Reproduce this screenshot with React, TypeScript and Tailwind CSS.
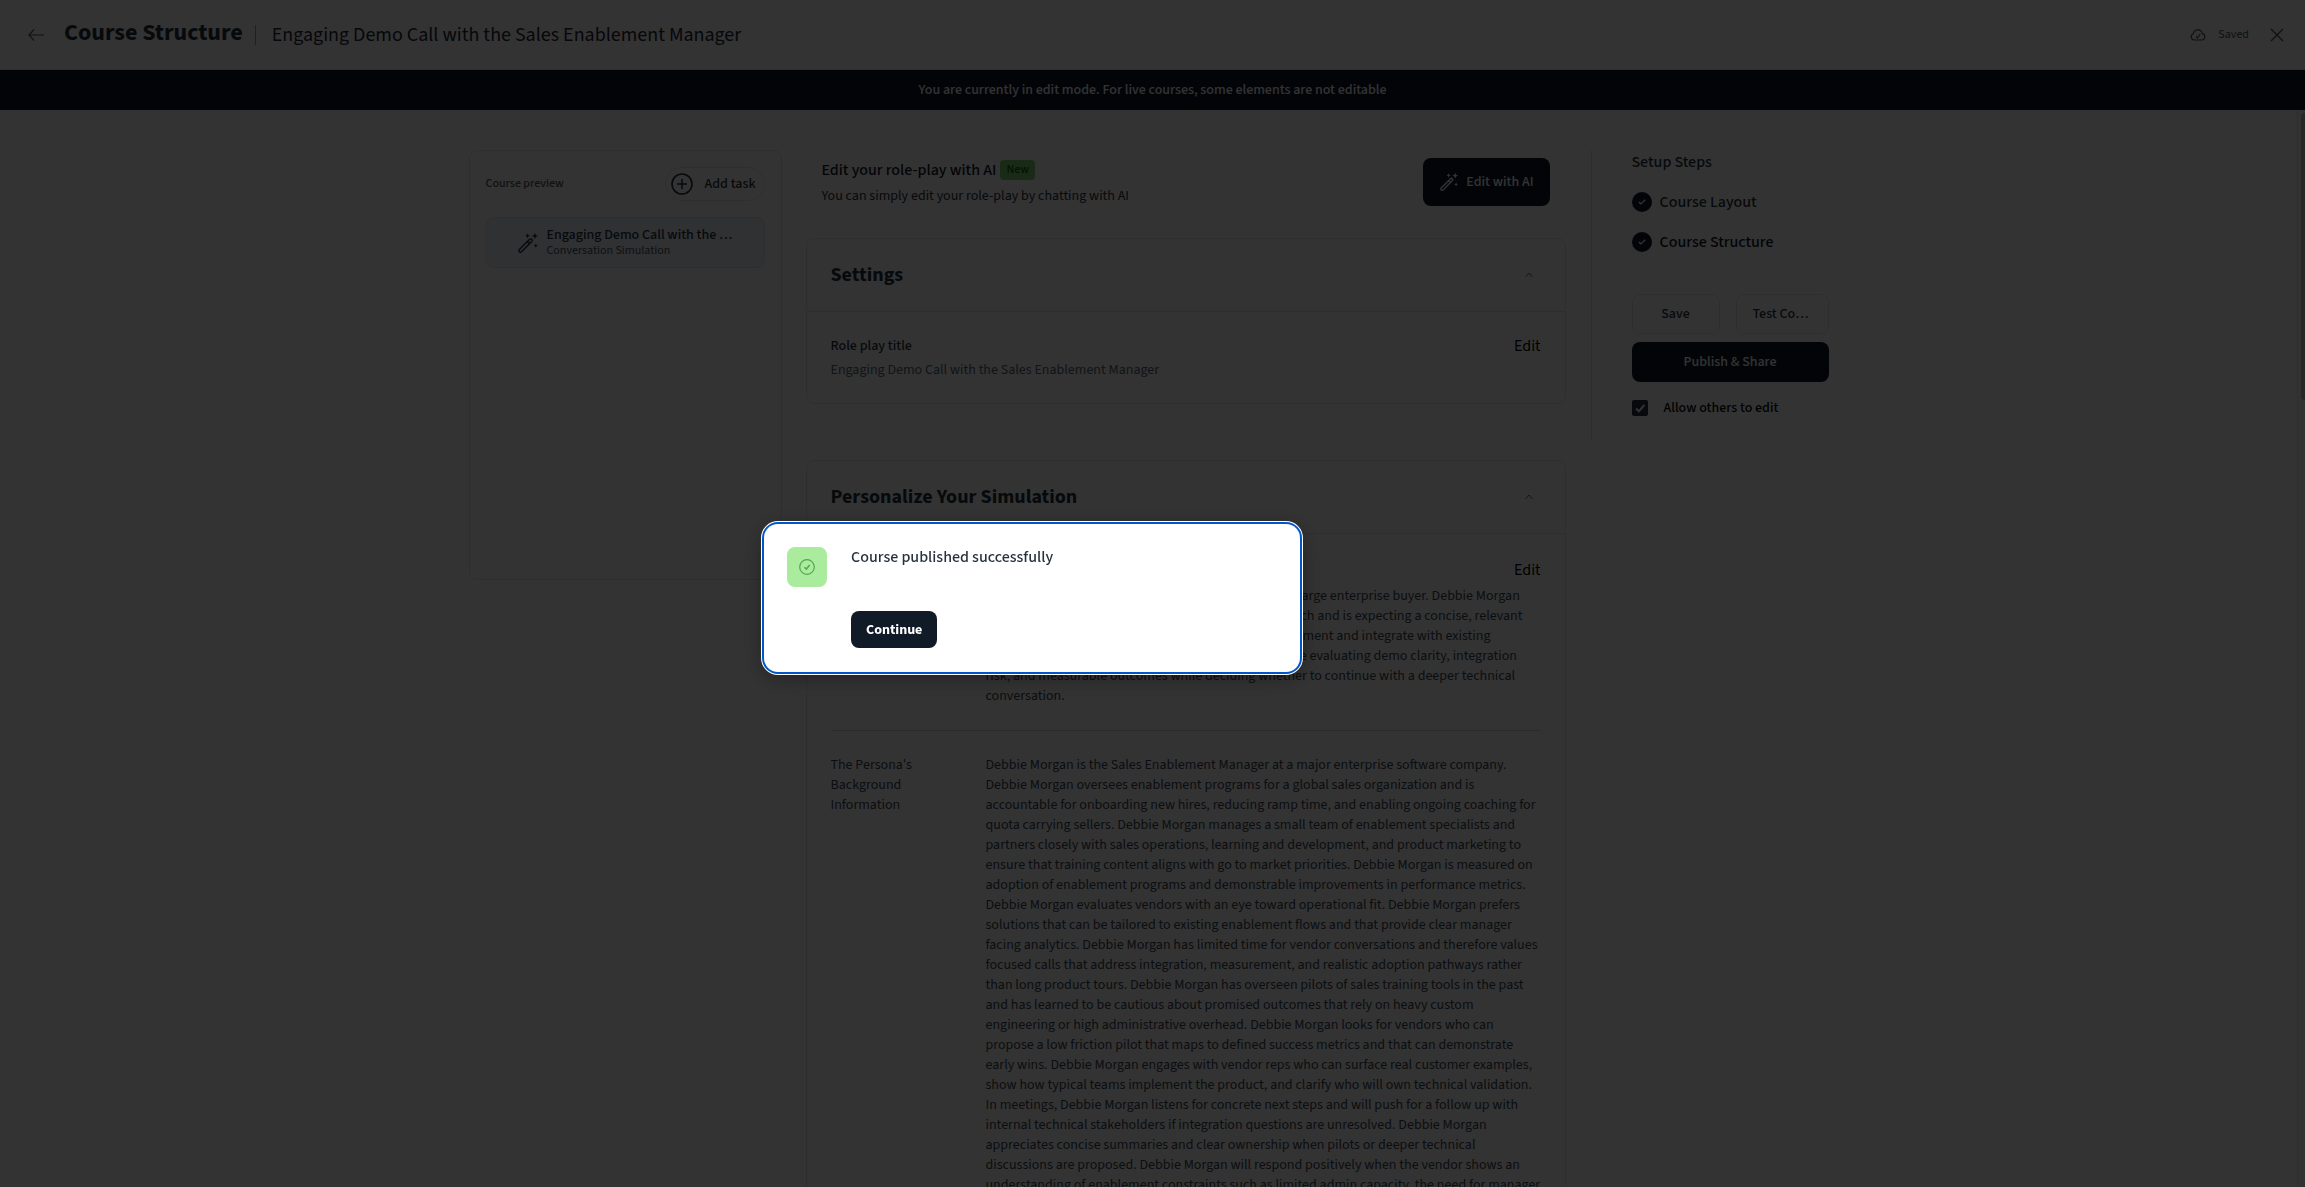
import React, { useState } from 'react';

const COURSE_TITLE = 'Engaging Demo Call with the Sales Enablement Manager';

const SCENARIO = [
  "You're presenting a product demo over video call to a large enterprise buyer. Debbie Morgan",
  'has already completed an introduction with a sales pitch and is expecting a concise, relevant',
  'walkthrough. The demo should align with sales enablement and integrate with existing',
  'systems used by the wider team. Debbie Morgan will be evaluating demo clarity, integration',
  'risk, and measurable outcomes while deciding whether to continue with a deeper technical',
  'conversation.',
];

const BACKGROUND = [
  'Debbie Morgan is the Sales Enablement Manager at a major enterprise software company.',
  'Debbie Morgan oversees enablement programs for a global sales organization and is',
  'accountable for onboarding new hires, reducing ramp time, and enabling ongoing coaching for',
  'quota carrying sellers. Debbie Morgan manages a small team of enablement specialists and',
  'partners closely with sales operations, learning and development, and product marketing to',
  'ensure that training content aligns with go to market priorities. Debbie Morgan is measured on',
  'adoption of enablement programs and demonstrable improvements in performance metrics.',
  'Debbie Morgan evaluates vendors with an eye toward operational fit. Debbie Morgan prefers',
  'solutions that can be tailored to existing enablement flows and that provide clear manager',
  'facing analytics. Debbie Morgan has limited time for vendor conversations and therefore values',
  'focused calls that address integration, measurement, and realistic adoption pathways rather',
  'than long product tours. Debbie Morgan has overseen pilots of sales training tools in the past',
  'and has learned to be cautious about promised outcomes that rely on heavy custom',
  'engineering or high administrative overhead. Debbie Morgan looks for vendors who can',
  'propose a low friction pilot that maps to defined success metrics and that can demonstrate',
  'early wins. Debbie Morgan engages with vendor reps who can surface real customer examples,',
  'show how typical teams implement the product, and clarify who will own technical validation.',
  'In meetings, Debbie Morgan listens for concrete next steps and will push for a follow up with',
  'internal technical stakeholders if integration questions are unresolved. Debbie Morgan',
  'appreciates concise summaries and clear ownership when pilots or deeper technical',
  'discussions are proposed. Debbie Morgan will respond positively when the vendor shows an',
  'understanding of enablement constraints such as limited admin capacity, the need for manager',
];

const WandIcon: React.FC<{ className?: string }> = ({ className }) => (
  <svg viewBox="0 0 24 24" className={className} fill="none" stroke="currentColor" strokeWidth="1.6" strokeLinejoin="round">
    <path d="M2.6 19.2 13.8 8a1.6 1.6 0 0 1 2.3 2.3L4.9 21.5a1.6 1.6 0 0 1-2.3-2.3ZM11.4 10.4l2.3 2.3" />
    <path
      stroke="none"
      fill="currentColor"
      d="m19.5.8 1 2.5 2.5 1-2.5 1-1 2.5-1-2.5-2.5-1 2.5-1zM11.5 1.5l.8 1.8 1.8.8-1.8.8-.8 1.8-.8-1.8-1.8-.8 1.8-.8zM20.5 12.5l.7 1.6 1.6.7-1.6.7-.7 1.6-.7-1.6-1.6-.7 1.6-.7z"
    />
  </svg>
);

const CardHeader: React.FC<{ title: string }> = ({ title }) => (
  <div className="flex h-[73px] items-center justify-between border-b border-gray-200 px-6">
    <h2 className="text-xl font-bold text-[#27323f]">{title}</h2>
    <button aria-label="Collapse" className="mr-2 text-gray-500">
      <svg viewBox="0 0 8 6" className="h-[6px] w-2" fill="none" stroke="currentColor">
        <path d="M.5 5 4 1l3.5 4" />
      </svg>
    </button>
  </div>
);

const Step: React.FC<{ label: string; current?: boolean }> = ({ label, current }) => (
  <li className={`flex items-center gap-2 text-base leading-5 font-medium ${current ? 'text-[#0f172a]' : 'text-[#27323f]'}`}>
    <span className="flex h-5 w-5 items-center justify-center rounded-full bg-[#0f172a] text-white">
      <svg viewBox="0 0 8 6" className="h-[6px] w-2" fill="none" stroke="currentColor" strokeWidth="1.2">
        <path d="m.8 3 2 2L7.3.8" />
      </svg>
    </span>
    {label}
  </li>
);

const Lines: React.FC<{ lines: string[] }> = ({ lines }) => (
  <p className="flex-1 whitespace-pre text-[#3b4754]">{lines.join('\n')}</p>
);

const TopBar: React.FC = () => (
  <header className="flex h-[70px] shrink-0 items-center justify-between border-b border-gray-200 px-4">
    <div className="flex items-center">
      <button aria-label="Back" className="ml-3 text-gray-600">
        <svg viewBox="0 0 17 14" className="h-[14px] w-4" fill="none" stroke="currentColor" strokeWidth="1.2">
          <path d="M17 7H1M6.5 1 1 7l5.5 6" />
        </svg>
      </button>
      <h1 className="ml-5 pb-1 text-2xl leading-7 font-bold text-[#27323f]">Course Structure</h1>
      <span className="ml-3 h-5 w-px bg-gray-400" />
      <span className="ml-4 text-xl text-[#1f2937]">{COURSE_TITLE}</span>
    </div>
    <div className="flex items-center text-[#4a5663]">
      <svg viewBox="0 0 16 13" className="h-[13px] w-4" fill="none" stroke="currentColor" strokeWidth="1.2">
        <path d="M4 12a3.2 3.2 0 0 1-.7-6.2A4.7 4.7 0 0 1 12.5 5.6 3.3 3.3 0 0 1 12 12ZM6 8.3l1.5 1.5L10.3 6" />
      </svg>
      <span className="ml-3 text-xs">Saved</span>
      <button aria-label="Close" className="ml-4">
        <svg viewBox="0 0 24 24" className="h-6 w-6" fill="none" stroke="currentColor" strokeWidth="1.4">
          <path d="m6 6 12 12M18 6 6 18" />
        </svg>
      </button>
    </div>
  </header>
);

const CoursePreview: React.FC = () => (
  <aside className="h-[430px] w-[313px] shrink-0 rounded-lg border border-gray-200 px-4 pt-4">
    <div className="flex items-center justify-between">
      <span className="text-xs font-medium text-[#4a5663]">Course preview</span>
      <button className="flex h-[34px] items-center gap-3 rounded-full border border-gray-200 pr-2 pl-[5px] font-medium text-[#27323f]">
        <svg viewBox="0 0 22 22" className="h-[22px] w-[22px]" fill="none" stroke="currentColor" strokeWidth="1.6">
          <circle cx="11" cy="11" r="10" />
          <path d="M11 6v10M6 11h10" />
        </svg>
        Add task
      </button>
    </div>
    <div className="mt-4 flex h-[51px] items-center gap-2 rounded-lg border border-gray-200 bg-[#edf2f8] pr-7 pl-[30px]">
      <WandIcon className="h-[22px] w-[22px] shrink-0 text-[#27323f]" />
      <div className="min-w-0 pt-px">
        <p className="truncate leading-4 font-medium text-[#27323f]">{COURSE_TITLE}</p>
        <p className="text-xs leading-4 text-[#4a5663]">Conversation Simulation</p>
      </div>
    </div>
  </aside>
);

const SetupSteps: React.FC = () => {
  const [allowEdit, setAllowEdit] = useState(true);

  return (
    <aside className="h-[290px] w-[238px] shrink-0 border-l border-gray-200 pl-10">
      <h3 className="text-base leading-6 font-medium text-[#27323f]">Setup Steps</h3>
      <ul className="mt-[18px] space-y-5">
        <Step label="Course Layout" />
        <Step label="Course Structure" current />
      </ul>
      <div className="mt-[42px] flex gap-4">
        <button className="h-10 w-[88px] rounded-lg border border-gray-200 font-medium text-[#27323f]">Save</button>
        <button className="h-10 min-w-0 flex-1 truncate rounded-lg border border-gray-200 px-4 font-medium text-[#27323f]">
          Test Course
        </button>
      </div>
      <button className="mt-2 h-10 w-full rounded-lg bg-[#0f172a] font-medium text-white">Publish &amp; Share</button>
      <label className="mt-4 flex items-center gap-4 font-medium text-black">
        <span className="relative flex h-4 w-4">
          <input
            type="checkbox"
            checked={allowEdit}
            onChange={(e) => setAllowEdit(e.target.checked)}
            className="h-4 w-4 appearance-none rounded-xs bg-[#27323f]"
          />
          {allowEdit && (
            <svg viewBox="0 0 16 16" className="pointer-events-none absolute inset-0" fill="none" stroke="white" strokeWidth="2">
              <path d="m4 8.5 2.8 2.8L12.3 5" />
            </svg>
          )}
        </span>
        Allow others to edit
      </label>
    </aside>
  );
};

const Editor: React.FC = () => (
  <main className="mr-[25px] ml-6 min-w-0 flex-1">
    <div className="flex items-start justify-between pt-2 pr-4 pl-4">
      <div className="pt-[2px]">
        <h2 className="flex items-center gap-1 text-base leading-5 font-medium text-[#0f172a]">
          Edit your role-play with AI
          <span className="rounded-sm bg-[#7fd870] px-[6px] text-xs leading-5 text-[#14611a]">New</span>
        </h2>
        <p className="mt-[6px] text-[#27323f]">You can simply edit your role-play by chatting with AI</p>
      </div>
      <button className="flex h-12 items-center gap-[7px] rounded-lg bg-[#0f172a] px-4 font-medium text-white">
        <WandIcon className="h-5 w-5" />
        Edit with AI
      </button>
    </div>

    <section className="mt-8 rounded-lg border border-gray-200">
      <CardHeader title="Settings" />
      <div className="flex h-[91px] items-start justify-between px-6 pt-6">
        <div>
          <h3 className="font-medium text-[#27323f]">Role play title</h3>
          <p className="mt-1 text-[#5b6773]">{COURSE_TITLE}</p>
        </div>
        <button className="text-base leading-5 text-black">Edit</button>
      </div>
    </section>

    <section className="mt-14 rounded-lg border border-gray-200">
      <CardHeader title="Personalize Your Simulation" />
      <div className="px-6 pt-[26px]">
        <div className="flex items-center justify-between">
          <h3 className="font-medium text-[#27323f]">Persona</h3>
          <button className="text-base leading-5 text-black">Edit</button>
        </div>
        <div className="mt-[6px] flex gap-6 border-b border-gray-300 pb-6 text-[#3b4754]">
          <span className="w-[131px]">Scenario</span>
          <Lines lines={SCENARIO} />
        </div>
        <div className="flex gap-6 py-6 text-[#3b4754]">
          <span className="w-[131px]">
            The Persona's
            <br />
            Background
            <br />
            Information
          </span>
          <Lines lines={BACKGROUND} />
        </div>
      </div>
    </section>
  </main>
);

const App: React.FC = () => {
  const [showDialog, setShowDialog] = useState(true);

  return (
    <div className="flex h-screen flex-col overflow-hidden bg-white font-['Source_Sans_3','Noto_Sans_CJK_SC',sans-serif] text-sm leading-5">
      <TopBar />
      <div className="flex h-10 shrink-0 items-center justify-center bg-[#0f172a] font-medium text-white">
        You are currently in edit mode. For live courses, some elements are not editable
      </div>
      <div className="flex min-h-0 flex-1">
        <div className="flex flex-1 items-start justify-center overflow-hidden pt-10">
          <div className="flex w-full max-w-[1360px] items-start">
            <CoursePreview />
            <Editor />
            <SetupSteps />
          </div>
        </div>
        <div className="w-2 border-l border-gray-200 bg-gray-50 pt-[3px] pl-[3px]">
          <div className="h-[287px] rounded-l-sm bg-[#c1c1c1]" />
        </div>
      </div>

      {showDialog && (
        <div className="fixed inset-0 flex items-center justify-center bg-black/80 pt-[9px] pr-[241px]">
          <div
            role="dialog"
            aria-labelledby="dialog-title"
            className="flex h-[148px] w-[536px] items-start gap-6 rounded-[14px] bg-white px-[23px] pt-[23px] shadow-[0_0_0_2px_#0057c8,0_0_0_3px_#ffffff,0_4px_24px_rgba(0,0,0,0.4)]"
          >
            <span className="flex h-10 w-10 items-center justify-center rounded-lg bg-[#abeb9d] text-[#55a64d]">
              <svg viewBox="0 0 16 16" className="h-4 w-4" fill="none" stroke="currentColor" strokeWidth="1.2">
                <circle cx="8" cy="8" r="7.3" />
                <path d="m5.4 8.3 1.9 1.8L10.7 6" strokeWidth="1.5" />
              </svg>
            </span>
            <div>
              <h2 id="dialog-title" className="text-base leading-5 font-medium text-[#27323f]">
                Course published successfully
              </h2>
              <button
                onClick={() => setShowDialog(false)}
                className="mt-11 h-[37px] rounded-lg bg-[#101b27] px-[15px] font-bold text-white"
              >
                Continue
              </button>
            </div>
          </div>
        </div>
      )}
    </div>
  );
};

export default App;
